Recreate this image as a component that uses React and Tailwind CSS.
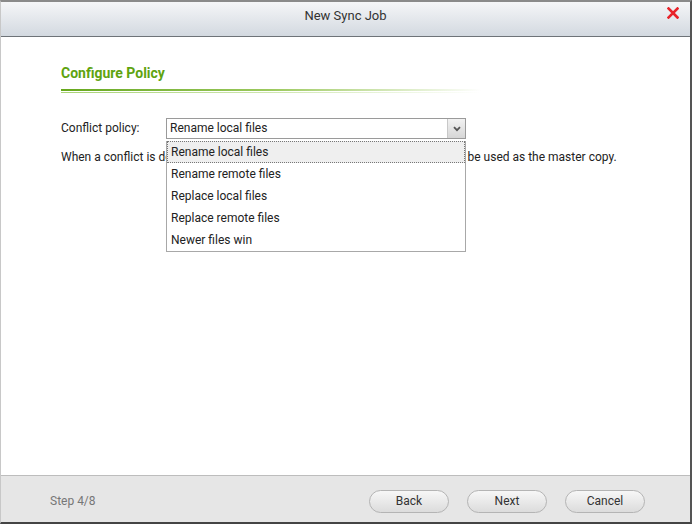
import React from "react";

const items = [
  "Rename local files",
  "Rename remote files",
  "Replace local files",
  "Replace remote files",
  "Newer files win",
];

function Btn({ children }) {
  return (
    <button className="w-[80px] h-[23px] rounded-full border border-[#b4b4b4] bg-gradient-to-b from-[#f7f7f7] to-[#dcdcdc] text-[12px] leading-[21px] text-[#333] text-center">
      {children}
    </button>
  );
}

export default function App() {
  return (
    <div className="w-[692px] h-[524px] flex flex-col bg-white border-t-2 border-t-[#8a8a8a] border-l border-l-[#c8c8c8] border-r-2 border-r-[#555] border-b-2 border-b-[#444] font-['Roboto',sans-serif] overflow-hidden">
      <div className="relative h-[35px] shrink-0 bg-gradient-to-b from-[#f5f6f8] to-[#d3d9e0] border-b border-b-[#6e7378] flex justify-center">
        <div className="pt-[5px] text-[13px] leading-[18px] text-[#333]">New Sync Job</div>
        <svg className="absolute left-[666px] top-[5px]" width="12" height="12" viewBox="0 0 12 12">
          <path d="M1.5 1.5 L10.5 10.5 M10.5 1.5 L1.5 10.5" stroke="#e8232a" strokeWidth="2.6" strokeLinecap="square" />
        </svg>
      </div>

      <div className="flex-1 px-[60px] pt-[26px]">
        <div className="text-[14px] leading-[20px] font-bold text-[#5ea30f]">Configure Policy</div>
        <div className="mt-[6px] w-[420px] h-[2px] bg-gradient-to-r from-[#66a81a] via-[#9cc95e] to-transparent" />
        <div className="mt-[1px] w-[420px] h-[1px] bg-gradient-to-r from-[#a9d276] via-[#cfe6b0] to-transparent" />

        <div className="mt-[25px] flex items-center">
          <div className="w-[105px] text-[12px] leading-[21px] text-[#222]">Conflict policy:</div>
          <div className="relative">
            <div className="w-[300px] h-[21px] border border-[#9a9a9a] flex bg-white">
              <div className="flex-1 pl-[3px] text-[12px] leading-[19px] text-[#222]">Rename local files</div>
              <div className="w-[18px] h-full border-l border-l-[#c8c8c8] bg-gradient-to-b from-[#f2f2f2] to-[#d6d6d6] flex items-center justify-center">
                <svg width="8" height="6" viewBox="0 0 8 6">
                  <path d="M1 1.2 L4 4.2 L7 1.2" stroke="#555" strokeWidth="1.8" fill="none" />
                </svg>
              </div>
            </div>
            <div className="absolute left-0 top-[23px] w-[300px] bg-white border-x border-b border-[#a8a8a8] z-10">
              {items.map((t, i) => (
                <div
                  key={t}
                  className={
                    i === 0
                      ? "h-[22px] pl-[3px] text-[12px] leading-[20px] text-[#222] bg-[#efefef] border border-dotted border-[#777]"
                      : "h-[22px] pl-[4px] text-[12px] leading-[22px] text-[#222]"
                  }
                >
                  {t}
                </div>
              ))}
            </div>
          </div>
        </div>

        <div className="mt-[10px] text-[12px] leading-[16px] text-[#222] whitespace-nowrap">
          When a conflict is detected, choose which version of the conflicting files will be used as the master copy.
        </div>
      </div>

      <div className="h-[47px] shrink-0 bg-[#e6e6e6] border-t border-t-[#bdbdbd] flex items-center pt-[4px] pl-[49px] pr-[45px]">
        <div className="text-[12px] text-[#777] flex-1">Step 4/8</div>
        <div className="flex gap-[18px]">
          <Btn>Back</Btn>
          <Btn>Next</Btn>
          <Btn>Cancel</Btn>
        </div>
      </div>
    </div>
  );
}
